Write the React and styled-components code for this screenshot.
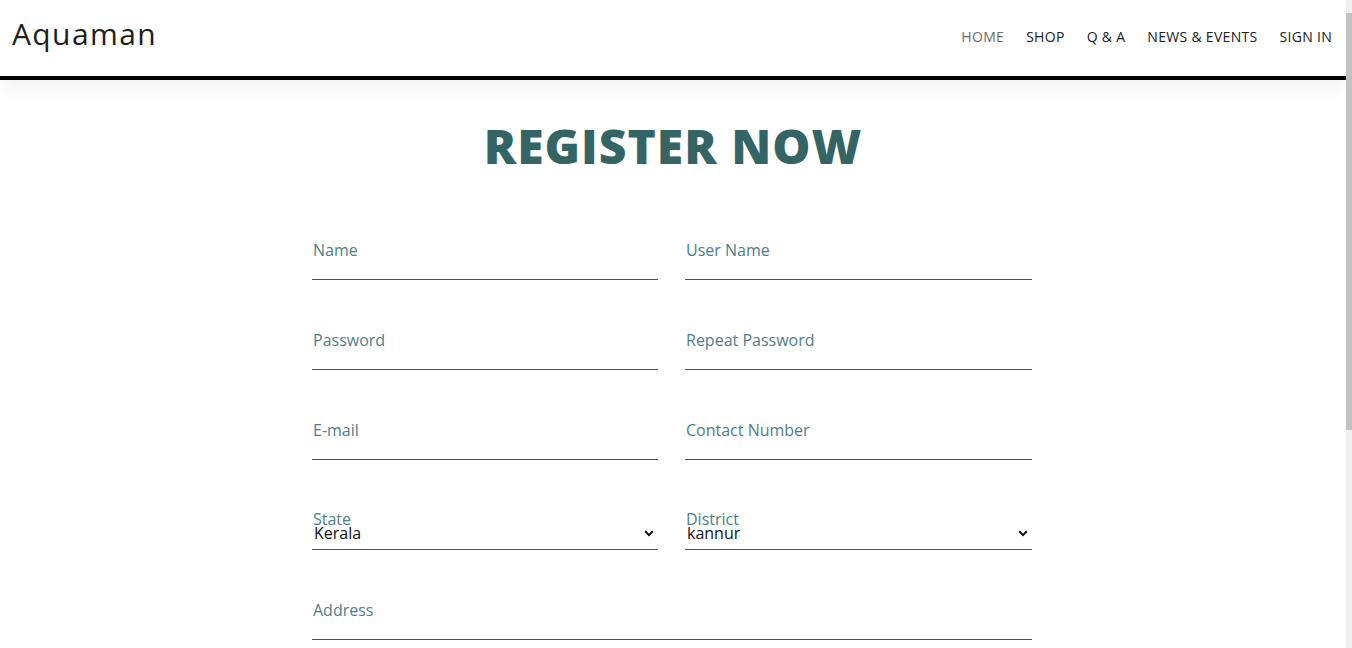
import React from "react";
import styled, { createGlobalStyle } from "styled-components";

const Global = createGlobalStyle`
  html, body { margin: 0; padding: 0; background: #fff; height: 100%; overflow: hidden; }
  body { font-family: "Open Sans", "Noto Sans", sans-serif; }
  #root { height: 100%; }
  * { box-sizing: border-box; }
`;

const Viewport = styled.div`
  position: relative;
  height: 100vh;
  overflow: hidden;
  padding-right: 6px;
`;

const ScrollTrack = styled.div`
  position: absolute;
  top: 0;
  right: 0;
  bottom: 0;
  width: 6px;
  background: #f0f0f0;
  z-index: 5;
`;

const ScrollThumb = styled.div`
  position: absolute;
  top: 13px;
  left: 0;
  width: 6px;
  height: 417px;
  background: #c2c2c2;
`;

const Header = styled.header`
  display: flex;
  align-items: center;
  justify-content: space-between;
  height: 80px;
  padding: 0 14px 4px 12px;
  border-bottom: 4px solid #000;
  box-shadow: 0 6px 18px rgba(20, 30, 60, 0.07);
  background: #fff;
  position: relative;
  z-index: 1;
`;

const Logo = styled.div`
  font-family: "Open Sans", sans-serif;
  font-size: 30px;
  font-weight: 400;
  color: #1e1e1a;
  letter-spacing: 1.4px;
  padding-bottom: 6px;
`;

const Nav = styled.nav`
  display: flex;
  align-items: center;
  gap: 22px;
`;

const NavLink = styled.a`
  font-family: "Open Sans", sans-serif;
  font-size: 14px;
  color: ${(p) => (p.$active ? "#6a6a6a" : "#202020")};
  text-decoration: none;
  text-transform: uppercase;
  letter-spacing: 0.3px;
`;

const Main = styled.main`
  padding: 38px 0 360px;
`;

const Title = styled.h1`
  margin: 0 0 60px;
  text-align: center;
  font-family: "Open Sans", sans-serif;
  font-weight: 800;
  font-size: 48px;
  line-height: 56px;
  letter-spacing: 1px;
  color: #356464;
`;

const Form = styled.form`
  width: 720px;
  margin: 0 auto;
  display: grid;
  grid-template-columns: 346px 347px;
  column-gap: 27px;
  row-gap: 44px;
  position: relative;
  left: -1px;
`;

const Input = styled.input`
  grid-column: ${(p) => (p.$full ? "1 / -1" : "auto")};
  display: block;
  width: 100%;
  height: 46px;
  border: none;
  border-bottom: 1px solid #3d5757;
  padding: 0 0 14px 1px;
  background: transparent;
  font-family: "Open Sans", sans-serif;
  font-size: 16px;
  color: #222;
  outline: none;
  &::placeholder { color: #4d7e88; }
`;

const SelectField = styled.label`
  position: relative;
  display: flex;
  flex-direction: column;
  height: 46px;
  padding-top: 8px;
  border-bottom: 1px solid #3d5757;
`;

const SelectLabel = styled.span`
  font-family: "Open Sans", sans-serif;
  font-size: 16px;
  line-height: 14px;
  color: #4d7e88;
  padding-left: 1px;
`;

const Select = styled.select`
  appearance: none;
  -webkit-appearance: none;
  border: none;
  outline: none;
  background: transparent;
  font-family: "Open Sans", sans-serif;
  font-size: 16px;
  line-height: 14px;
  height: 14px;
  padding: 0 0 0 2px;
  color: #111;
`;

const Chevron = styled.svg`
  position: absolute;
  right: 4px;
  top: 26px;
  pointer-events: none;
`;

function SelectBox({ label, value }) {
  return (
    <SelectField>
      <SelectLabel>{label}</SelectLabel>
      <Select defaultValue={value}>
        <option value={value}>{value}</option>
      </Select>
      <Chevron width="10" height="7" viewBox="0 0 10 7">
        <path d="M1.2 1.3 5 5.1 8.8 1.3" fill="none" stroke="#111" strokeWidth="2" />
      </Chevron>
    </SelectField>
  );
}

export default function App() {
  const links = ["Home", "Shop", "Q & A", "News & Events", "Sign In"];
  return (
    <Viewport>
      <Global />
      <Header>
        <Logo>Aquaman</Logo>
        <Nav>
          {links.map((l, i) => (
            <NavLink key={l} href="#" $active={i === 0}>{l}</NavLink>
          ))}
        </Nav>
      </Header>
      <Main>
        <Title>REGISTER NOW</Title>
        <Form>
          <Input placeholder="Name" />
          <Input placeholder="User Name" />
          <Input type="password" placeholder="Password" />
          <Input type="password" placeholder="Repeat Password" />
          <Input placeholder="E-mail" />
          <Input placeholder="Contact Number" />
          <SelectBox label="State" value="Kerala" />
          <SelectBox label="District" value="kannur" />
          <Input $full placeholder="Address" />
        </Form>
      </Main>
      <ScrollTrack>
        <ScrollThumb />
      </ScrollTrack>
    </Viewport>
  );
}
